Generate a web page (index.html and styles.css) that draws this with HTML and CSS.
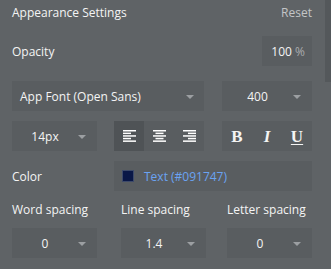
FILE: index.html
```html
<!DOCTYPE html>
<html>
<head>
<meta charset="utf-8">
<link rel="stylesheet" href="styles.css">
</head>
<body>
<div class="panel">
  <div class="header">
    <span class="title">Appearance Settings</span>
    <span class="reset">Reset</span>
  </div>
  <div class="row opacity-row">
    <span class="label">Opacity</span>
    <div class="box opacity-box"><span class="val">100</span>&nbsp;<span class="unit">%</span></div>
  </div>
  <div class="row font-row">
    <div class="box font-box"><span class="font-name">App Font (Open Sans)</span><span class="arrow"></span></div>
    <div class="box dd weight-box"><span class="dd-val">400</span><span class="arrow"></span></div>
  </div>
  <div class="row style-row">
    <div class="box dd size-box"><span class="dd-val">14px</span><span class="arrow"></span></div>
    <div class="box seg align-box">
      <div class="seg-item active">
        <svg width="13" height="12" viewBox="0 0 13 12"><g fill="#fff"><rect x="0" y="0" width="13" height="1.5"/><rect x="0" y="2.6" width="8" height="1.5"/><rect x="0" y="5.2" width="13" height="1.5"/><rect x="0" y="7.8" width="8" height="1.5"/><rect x="0" y="10.4" width="13" height="1.5"/></g></svg>
      </div>
      <div class="seg-item">
        <svg width="13" height="12" viewBox="0 0 13 12"><g fill="#fff"><rect x="0" y="0" width="13" height="1.5"/><rect x="2.5" y="2.6" width="8" height="1.5"/><rect x="0" y="5.2" width="13" height="1.5"/><rect x="2.5" y="7.8" width="8" height="1.5"/><rect x="0" y="10.4" width="13" height="1.5"/></g></svg>
      </div>
      <div class="seg-item">
        <svg width="13" height="12" viewBox="0 0 13 12"><g fill="#fff"><rect x="0" y="0" width="13" height="1.5"/><rect x="5" y="2.6" width="8" height="1.5"/><rect x="0" y="5.2" width="13" height="1.5"/><rect x="5" y="7.8" width="8" height="1.5"/><rect x="0" y="10.4" width="13" height="1.5"/></g></svg>
      </div>
    </div>
    <div class="box seg biu-box">
      <div class="seg-item"><span class="fmt b">B</span></div>
      <div class="seg-item"><span class="fmt i">I</span></div>
      <div class="seg-item"><span class="fmt u">U</span></div>
    </div>
  </div>
  <div class="row color-row">
    <span class="label">Color</span>
    <div class="box color-box"><span class="swatch"></span><span class="color-text">Text (#091747)</span></div>
  </div>
  <div class="spacing">
    <span class="label">Word spacing</span>
    <span class="label">Line spacing</span>
    <span class="label">Letter spacing</span>
    <div class="box dd sp-box"><span class="dd-val">0</span><span class="arrow"></span></div>
    <div class="box dd sp-box"><span class="dd-val">1.4</span><span class="arrow"></span></div>
    <div class="box dd sp-box"><span class="dd-val">0</span><span class="arrow"></span></div>
  </div>
  <div class="scroll-thumb"></div>
</div>
</body>
</html>
```

FILE: styles.css
```css
html, body {
  margin: 0;
  padding: 0;
  background: #5f6366;
}
body {
  font-family: "Open Sans", "Noto Sans", sans-serif;
  font-size: 12px;
  color: #f4f4f4;
}
.panel {
  position: relative;
  width: 331px;
  height: 269px;
  padding: 0 19px 0 12px;
  box-sizing: border-box;
  overflow: hidden;
}
.header {
  height: 24px;
  display: flex;
  align-items: center;
  justify-content: space-between;
}
.title {
  color: #f4f4f4;
}
.reset {
  color: #c3c5c7;
}
.label {
  white-space: nowrap;
}
.row {
  display: flex;
  align-items: center;
}
.box {
  background: #595d60;
  height: 30px;
  box-sizing: border-box;
  display: flex;
  align-items: center;
}
.opacity-row {
  margin-top: 12px;
  justify-content: space-between;
}
.opacity-box {
  width: 50px;
  justify-content: flex-end;
  padding-right: 7px;
}
.unit {
  color: #a9acae;
}
.font-row {
  margin-top: 15px;
  justify-content: space-between;
}
.font-box {
  width: 192px;
  padding: 0 10px 0 8px;
  justify-content: space-between;
}
.arrow {
  width: 0;
  height: 0;
  border-left: 4px solid transparent;
  border-right: 4px solid transparent;
  border-top: 4px solid #9c9fa2;
  margin-top: 1px;
}
.dd {
  padding-left: 10px;
  padding-right: 11px;
}
.dd .dd-val {
  flex: 1;
  text-align: center;
}
.dd .arrow {
  margin-left: 10px;
}
.weight-box {
  width: 90px;
}
.style-row {
  margin-top: 10px;
}
.size-box {
  width: 85px;
}
.seg {
  width: 90px;
}
.align-box {
  margin-left: 17px;
}
.biu-box {
  margin-left: 18px;
}
.seg-item {
  flex: 1;
  height: 100%;
  display: flex;
  align-items: center;
  justify-content: center;
}
.seg-item.active {
  background: #4f5356;
}
.fmt {
  font-family: "Liberation Serif", "DejaVu Serif", serif;
  font-weight: bold;
  font-size: 17px;
  line-height: 1;
  color: #f4f4f4;
}
.fmt.i {
  font-style: italic;
}
.fmt.u {
  text-decoration: underline;
  text-decoration-thickness: 1px;
  text-underline-offset: 2px;
}
.color-row {
  margin-top: 10px;
  justify-content: space-between;
}
.color-box {
  width: 198px;
  padding-left: 8px;
}
.swatch {
  width: 12px;
  height: 12px;
  box-sizing: border-box;
  background: #091747;
  border: 1px solid #3d4a6a;
}
.color-text {
  margin-left: 10px;
  color: #6aa3f2;
}
.spacing {
  display: grid;
  grid-template-columns: 109px 106px 85px;
  grid-template-rows: 18px 30px;
  row-gap: 10px;
  margin-top: 9px;
  align-items: center;
}
.sp-box {
  width: 85px;
}
.scroll-thumb {
  position: absolute;
  top: 0;
  right: 0;
  width: 6px;
  height: 82px;
  background: #54585b;
}
```
